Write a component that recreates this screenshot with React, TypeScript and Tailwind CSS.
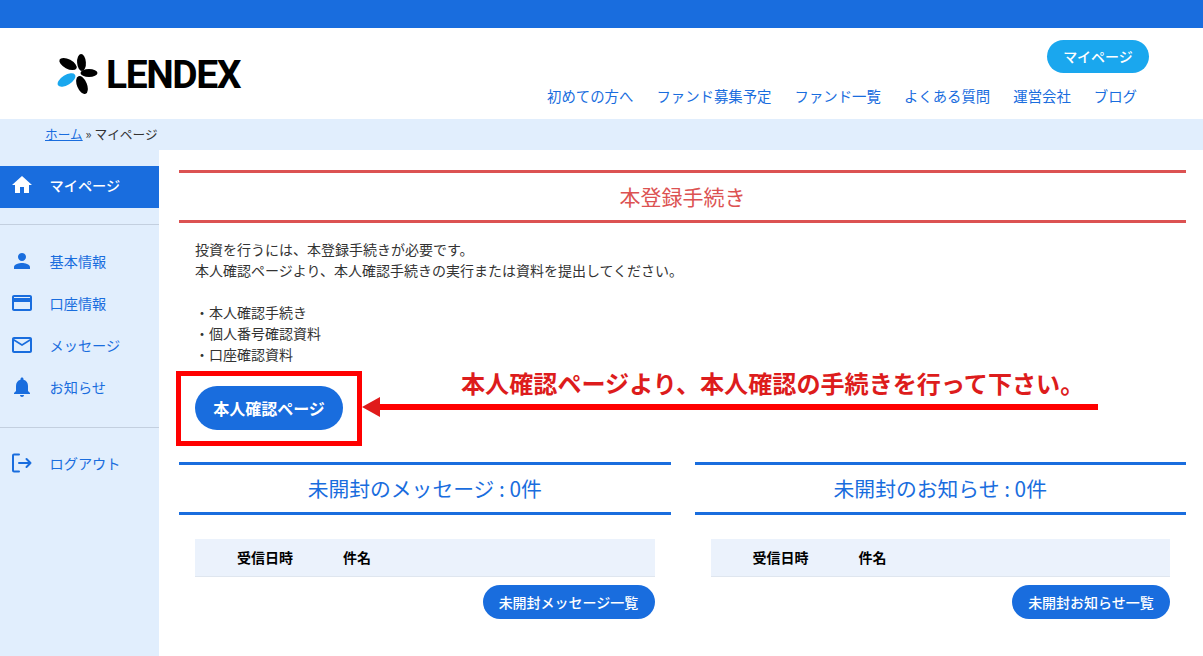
import React from "react";

const jp = "font-['Noto_Sans_CJK_JP','Liberation_Sans',sans-serif]";

function Logo() {
  return (
    <div className="flex items-center">
      <svg width="46" height="42" viewBox="0 0 46 42" className="block">
        <g fill="#000">
          <ellipse cx="12" cy="11" rx="9.5" ry="4.7" transform="rotate(28 12 11)" />
          <ellipse cx="25.5" cy="9.500" rx="4.4" ry="8.5" transform="rotate(-4 25.5 9.5)" />
          <ellipse cx="33" cy="20" rx="8.5" ry="4" />
          <ellipse cx="26" cy="32" rx="5" ry="9.5" transform="rotate(-22 26 32)" />
        </g>
        <ellipse cx="10.5" cy="27" rx="10" ry="5" transform="rotate(-32 10.5 27)" fill="#1aa7ee" />
      </svg>
      <span className="ml-[4px] mt-[2px] font-['Roboto',sans-serif] text-[39px] leading-none font-bold tracking-[-1.400px] text-black">LENDEX</span>
    </div>
  );
}

const HomeIcon = () => (
  <svg width="24" height="24" viewBox="0 0 24 24" fill="#fff"><path d="M10 20v-6h4v6h5v-8h3L12 3 2 12h3v8z" /></svg>
);
const PersonIcon = () => (
  <svg width="24" height="24" viewBox="0 0 24 24" fill="#196dde"><path d="M12 12c2.200 0 4-1.800 4-4s-1.800-4-4-4-4 1.800-4 4 1.800 4 4 4zm0 2c-2.700 0-8 1.300-8 4v2h16v-2c0-2.700-5.300-4-8-4z" /></svg>
);
const CardIcon = () => (
  <svg width="24" height="24" viewBox="0 0 24 24" fill="#196dde"><path d="M20 4H4c-1.100 0-2 .9-2 2v12c0 1.100.9 2 2 2h16c1.100 0 2-.9 2-2V6c0-1.100-.9-2-2-2zm0 14H4v-7h16v7zm0-11H4V6h16v1z" /></svg>
);
const MailIcon = () => (
  <svg width="24" height="24" viewBox="0 0 24 24" fill="#196dde"><path d="M22 6c0-1.100-.9-2-2-2H4c-1.100 0-2 .9-2 2v12c0 1.100.9 2 2 2h16c1.100 0 2-.9 2-2V6zm-2 0-8 5-8-5h16zm0 12H4V8l8 5 8-5v10z" /></svg>
);
const BellIcon = () => (
  <svg width="24" height="24" viewBox="0 0 24 24" fill="#196dde"><path d="M12 22c1.100 0 2-.9 2-2h-4c0 1.100.9 2 2 2zm6-6v-5c0-3.100-1.600-5.600-4.500-6.300V4c0-.8-.7-1.500-1.500-1.500s-1.500.7-1.500 1.500v.7C7.600 5.400 6 7.900 6 11v5l-2 2v1h16v-1l-2-2z" /></svg>
);
const LogoutIcon = () => (
  <svg width="24" height="24" viewBox="0 0 24 24" fill="none" stroke="#196dde" strokeWidth="2" strokeLinecap="round" strokeLinejoin="round"><path d="M9 3.500H4a1 1 0 0 0-1 1v15a1 1 0 0 0 1 1h5M9 12h11.500M16.500 8l4 4-4 4" /></svg>
);

function SideItem({ icon, label, last }: { icon: React.ReactNode; label: string; last?: boolean }) {
  return (
    <div className={`flex h-[42px] items-center pl-[10px] text-[14.2px] text-[#196dde] ${last ? "pb-[3px]" : "pb-[2px]"}`}>
      <span className="flex w-[24px] justify-center">{icon}</span>
      <span className="ml-[15.500px] leading-[20px]">{label}</span>
    </div>
  );
}

function Panel({ title, buttonLabel, buttonWidth }: { title: string; buttonLabel: string; buttonWidth: string }) {
  return (
    <section className="flex-1">
      <h2 className="flex h-[53px] items-center justify-center border-y-[3px] border-[#196dde] pb-[2px] text-[20.8px] leading-[28px] text-[#196dde]">{title}</h2>
      <div className="px-[16px] pt-[24px]">
        <div className="flex h-[38px] items-center border-b border-[#dfe6ef] bg-[#ebf2fc] pb-[2px] text-[14px] leading-[20px] font-bold text-black">
          <span className="ml-[42px] w-[106px]">受信日時</span>
          <span>件名</span>
        </div>
        <div className="mt-[8px] flex justify-end">
          <button className={`flex h-[34px] items-center justify-center rounded-full bg-[#196dde] text-[14px] leading-[20px] font-medium text-white ${buttonWidth}`}>{buttonLabel}</button>
        </div>
      </div>
    </section>
  );
}

export default function App() {
  return (
    <div className={`relative h-[656px] w-[1203px] overflow-hidden bg-white ${jp}`}>
      <div className="h-[28px] bg-[#196dde]" />
      <header className="flex h-[91px] items-start justify-between">
        <div className="ml-[56px] mt-[25px]"><Logo /></div>
        <div className="flex flex-col items-end">
          <button className="mr-[54px] mt-[12px] flex h-[33px] w-[102px] items-center justify-center rounded-full bg-[#1aa7ee] pb-[2px] text-[14px] leading-[20px] font-medium text-white">マイページ</button>
          <nav className="mr-[66px] mt-[13px] flex gap-[23px] text-[14.4px] leading-[20px] text-[#196dde]">
            {["初めての方へ", "ファンド募集予定", "ファンド一覧", "よくある質問", "運営会社", "ブログ"].map((t) => (
              <span key={t}>{t}</span>
            ))}
          </nav>
        </div>
      </header>
      <div className="h-[31px] bg-[#e1eefd] pl-[45px] pt-[6px] text-[12.7px] leading-[18px] text-[#333]">
        <a className="text-[#196dde] underline">ホーム</a> » マイページ
      </div>
      <div className="flex h-[506px]">
        <aside className="w-[159px] shrink-0 bg-[#e1eefd] pt-[16px]">
          <div className="flex h-[42px] items-center bg-[#196dde] pb-[4px] pl-[10px] text-[14.2px] leading-[20px] font-medium text-white">
            <span className="flex w-[24px] justify-center"><HomeIcon /></span>
            <span className="ml-[15.500px]">マイページ</span>
          </div>
          <div className="mt-[16px] border-t border-[#c3cfdf]" />
          <div className="mt-[16px]">
            <SideItem icon={<PersonIcon />} label="基本情報" />
            <SideItem icon={<CardIcon />} label="口座情報" />
            <SideItem icon={<MailIcon />} label="メッセージ" />
            <SideItem icon={<BellIcon />} label="お知らせ" />
          </div>
          <div className="mt-[18px] border-t border-[#c3cfdf]" />
          <div className="mt-[15px]">
            <SideItem icon={<LogoutIcon />} label="ログアウト" last />
          </div>
        </aside>
        <main className="flex-1 pl-[20px] pr-[17px] pt-[20px]">
          <h2 className="flex h-[53px] items-center justify-center border-y-[3px] border-[#dc5252] pb-[2px] text-[21px] leading-[28px] text-[#dc5252]">本登録手続き</h2>
          <div className="pl-[16px] pt-[16px] text-[14px] leading-[21px] text-[#333]">
            <p>投資を行うには、本登録手続きが必要です。</p>
            <p>本人確認ページより、本人確認手続きの実行または資料を提出してください。</p>
            <p className="mt-[21px]">・本人確認手続き</p>
            <p>・個人番号確認資料</p>
            <p>・口座確認資料</p>
            <button className="mt-[21px] flex h-[44px] w-[148px] items-center justify-center rounded-full bg-[#196dde] text-[16px] leading-[22px] font-bold text-white">本人確認ページ</button>
          </div>
          <div className="mt-[32px] flex gap-[24px]">
            <Panel title="未開封のメッセージ : 0件" buttonLabel="未開封メッセージ一覧" buttonWidth="w-[172px]" />
            <Panel title="未開封のお知らせ : 0件" buttonLabel="未開封お知らせ一覧" buttonWidth="w-[158px]" />
          </div>
        </main>
      </div>
      <div className="absolute left-[176px] top-[371px] h-[75px] w-[186px] border-[5px] border-[#ff0000]" />
      <div className="absolute left-[461px] top-[367px] text-[24.1px] font-bold leading-[32px] whitespace-nowrap text-[#dd1c1c]">本人確認ページより、本人確認の手続きを行って下さい。</div>
      <svg className="absolute left-[360px] top-[394px]" width="740" height="26" viewBox="0 0 740 26">
        <path d="M19 10 H738 V16 H19 Z" fill="#ff0000" />
        <path d="M2 13 L20 3 V23 Z" fill="#e01b1b" />
      </svg>
    </div>
  );
}
